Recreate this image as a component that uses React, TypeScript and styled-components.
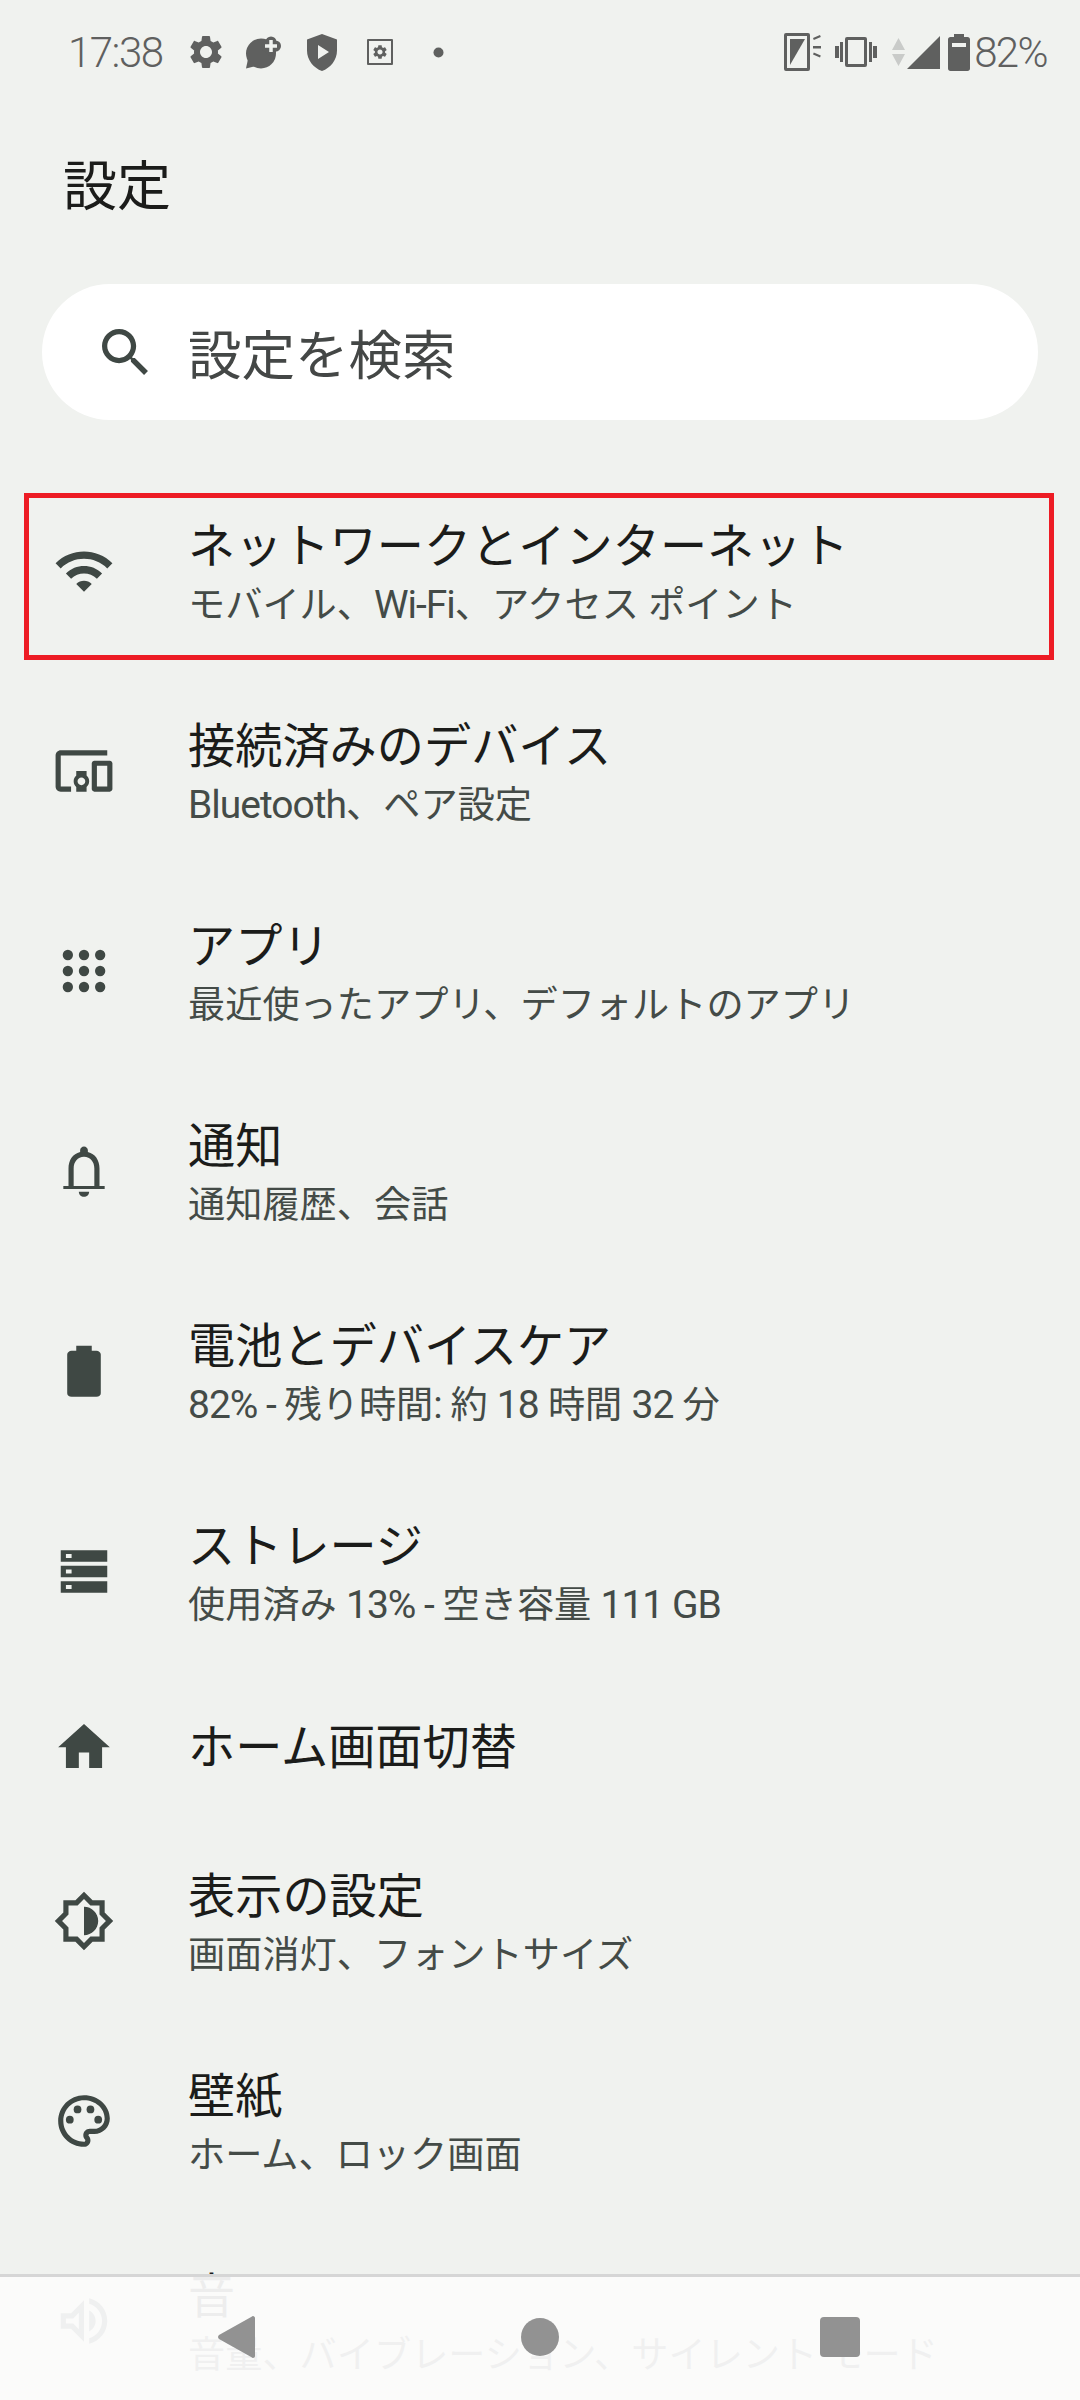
import React from 'react'
import styled, { createGlobalStyle } from 'styled-components'

type RowT = {
  title: string,
  sub?: React.ReactNode,
  icon: React.ReactNode,
  marked?: boolean
}

const GlobalStyle = createGlobalStyle`
  html, body {
    margin: 0;
    padding: 0;
    background: #f0f2ef;
  }
`
const Page = styled.div`
  position: relative;
  width: 1080px;
  height: 2400px;
  overflow: hidden;
  background: #f0f2ef;
  font-family: Roboto, "Noto Sans CJK JP", sans-serif;
`
const StatusBar = styled.div`
  display: flex;
  align-items: center;
  height: 104px;
  padding: 0 33px 0 68px;
  color: #5f605f;
`
const Clock = styled.span`
  font-size: 42px;
  font-weight: 300;
  letter-spacing: -1.5px;
  width: 93px;
`
const StatusIcon = styled.svg<{ $left: number }>`
  display: block;
  margin-left: ${props => props.$left}px;
  fill: #5f605f;
  flex: none;
`
const Spacer = styled.div`
  flex: 1;
`
const Percent = styled.span`
  font-size: 42px;
  font-weight: 300;
  letter-spacing: -1.6px;
  margin-left: 4px;
`
const PageTitle = styled.h1`
  margin: 0;
  padding: 54px 0 0 63px;
  height: 59px;
  font-size: 54px;
  line-height: 60px;
  font-weight: 400;
  color: #1b1c1a;
`
const SearchBar = styled.div`
  display: flex;
  align-items: center;
  height: 136px;
  margin: 67px 42px 51px;
  padding-left: 60px;
  border-radius: 68px;
  background: #ffffff;
`
const SearchIcon = styled.svg`
  width: 46px;
  height: 46px;
  fill: #3f4844;
  flex: none;
`
const SearchText = styled.span`
  margin: -2px 0 0 40px;
  font-size: 53.5px;
  color: #444746;
`
const List = styled.div`
  display: flex;
  flex-direction: column;
`
const Row = styled.div<{ $single: boolean }>`
  position: relative;
  display: flex;
  align-items: center;
  height: ${props => (props.$single ? 150 : 200)}px;
  padding-left: 53px;
`
const Marker = styled.div`
  position: absolute;
  top: 22px;
  left: 24px;
  right: 26px;
  bottom: 11px;
  border: 5px solid #ed1c24;
`
const RowIcon = styled.svg`
  width: 62px;
  height: 62px;
  fill: #3f4844;
  flex: none;
`
const RowText = styled.div<{ $single: boolean }>`
  display: flex;
  flex-direction: column;
  margin-left: 73px;
  padding-top: ${props => (props.$single ? 3 : 10)}px;
`
const RowTitle = styled.div`
  font-size: 47.2px;
  line-height: 58px;
  color: #1b1c1a;
`
const RowSub = styled.div`
  font-size: 37.2px;
  line-height: 58px;
  color: #444b47;
`
const Latin = styled.span`
  font-size: 39px;
  letter-spacing: -1px;
`
const NavBar = styled.div`
  position: absolute;
  left: 0;
  right: 0;
  bottom: 0;
  height: 123px;
  border-top: 3px solid #d6d6d6;
  background: rgba(251, 251, 251, 0.94);
`
const NavBack = styled.svg`
  position: absolute;
  left: 218px;
  top: 39px;
  width: 37px;
  height: 42px;
  fill: #929292;
`
const NavHome = styled.div`
  position: absolute;
  left: 521px;
  top: 41px;
  width: 38px;
  height: 38px;
  border-radius: 50%;
  background: #929292;
`
const NavRecent = styled.div`
  position: absolute;
  left: 820px;
  top: 40px;
  width: 40px;
  height: 40px;
  border-radius: 4px;
  background: #929292;
`

const rows: Array<RowT> = [
  {
    title: 'ネットワークとインターネット',
    sub: <>モバイル、<Latin>Wi-Fi</Latin>、アクセス ポイント</>,
    marked: true,
    icon: <path d="M1 9l2 2c4.97-4.97 13.03-4.97 18 0l2-2C16.93 2.93 7.08 2.93 1 9zm8 8l3 3 3-3c-1.65-1.66-4.34-1.66-6 0zm-4-4l2 2c2.76-2.76 7.24-2.76 10 0l2-2C15.14 9.14 8.87 9.14 5 13z" />
  },
  {
    title: '接続済みのデバイス',
    sub: <><Latin>Bluetooth</Latin>、ペア設定</>,
    icon: <path d="M3 6h18V4H3c-1.1 0-2 .9-2 2v12c0 1.1.9 2 2 2h4v-2H3V6zm10 6H9v1.78c-.61.55-1 1.33-1 2.22s.39 1.67 1 2.22V20h4v-1.78c.61-.55 1-1.34 1-2.22s-.39-1.67-1-2.22V12zm-2 5.5c-.83 0-1.5-.67-1.5-1.5s.67-1.5 1.5-1.5 1.5.67 1.5 1.5-.67 1.5-1.5 1.5zM22 8h-6c-.5 0-1 .5-1 1v10c0 .5.5 1 1 1h6c.5 0 1-.5 1-1V9c0-.5-.5-1-1-1zm-1 10h-4v-8h4v8z" />
  },
  {
    title: 'アプリ',
    sub: '最近使ったアプリ、デフォルトのアプリ',
    icon: (
      <>
        {[5.8, 12, 18.2].map(y => [5.75, 12, 18.25].map(x => (
          <circle key={`${x}-${y}`} cx={x} cy={y} r="2" />
        )))}
      </>
    )
  },
  {
    title: '通知',
    sub: '通知履歴、会話',
    icon: <path d="M12 22c1.1 0 2-.9 2-2h-4c0 1.1.9 2 2 2zM20 17.8h-2V11c0-3.07-1.63-5.64-4.5-6.32V4c0-.83-.67-1.5-1.5-1.5s-1.5.67-1.5 1.5v.68C7.64 5.36 6 7.92 6 11v6.8H4V19h16v-1.2zM16 17.8H8V11c0-2.48 1.51-4.5 4-4.5s4 2.02 4 4.5v6.8z" />
  },
  {
    title: '電池とデバイスケア',
    sub: <><Latin>82% - </Latin>残り時間<Latin>: </Latin>約 <Latin>18</Latin> 時間 <Latin>32</Latin> 分</>,
    icon: <path d="M16.8 4.2H15V2.2H9v2H7.2c-.9 0-1.7.7-1.7 1.4v15c0 .8.7 1.4 1.7 1.4h9.6c1 0 1.7-.6 1.7-1.4v-15c0-.7-.8-1.4-1.7-1.4z" />
  },
  {
    title: 'ストレージ',
    sub: <>使用済み <Latin>13% - </Latin>空き容量 <Latin>111 GB</Latin></>,
    icon: <path fillRule="evenodd" d="M3 4h18v4.4H3V4zm2 1.4V7h2.2V5.4H5zM3 10h18v4.4H3V10zm2 1.4V13h2.2v-1.6H5zM3 16h18v4.4H3V16zm2 1.4V19h2.2v-1.6H5z" />
  },
  {
    title: 'ホーム画面切替',
    icon: <path d="M10 20.5v-6h4v6h5v-8h3L12 3.5 2 12.5h3v8z" />
  },
  {
    title: '表示の設定',
    sub: '画面消灯、フォントサイズ',
    icon: <path d="M20 15.31L23.31 12 20 8.69V4h-4.69L12 .69 8.69 4H4v4.69L.69 12 4 15.31V20h4.69L12 23.31 15.31 20H20v-4.69zm-2-.83V18h-3.52L12 20.48 9.52 18H6v-3.52L3.52 12 6 9.52V6h3.52L12 3.52 14.48 6H18v3.52L20.48 12 18 14.48zM12 6.5v11c3.03 0 5.5-2.47 5.5-5.5S15.03 6.5 12 6.5z" />
  },
  {
    title: '壁紙',
    sub: 'ホーム、ロック画面',
    icon: (
      <>
        <path d="M12 22C6.49 22 2 17.51 2 12S6.49 2 12 2s10 4.04 10 9c0 3.31-2.69 6-6 6h-1.77c-.28 0-.5.22-.5.5 0 .12.05.23.13.33.41.47.64 1.06.64 1.67 0 1.38-1.12 2.5-2.5 2.5zm0-18c-4.41 0-8 3.59-8 8s3.59 8 8 8c.28 0 .5-.22.5-.5 0-.16-.08-.28-.14-.35-.41-.46-.63-1.05-.63-1.65 0-1.38 1.12-2.5 2.5-2.5H16c2.21 0 4-1.79 4-4 0-3.86-3.59-7-8-7z" />
        <circle cx="6.5" cy="11.5" r="1.5" />
        <circle cx="9.5" cy="7.5" r="1.5" />
        <circle cx="14.5" cy="7.5" r="1.5" />
        <circle cx="17.5" cy="11.5" r="1.5" />
      </>
    )
  },
  {
    title: '音',
    sub: '音量、バイブレーション、サイレント モード',
    icon: <path d="M3 9v6h4l5 5V4L7 9H3zm7-.17v6.34L7.83 13H5v-2h2.83L10 8.83zM16.5 12c0-1.77-1.02-3.29-2.5-4.03v8.05c1.48-.73 2.5-2.25 2.5-4.02zM14 3.23v2.06c2.89.86 5 3.54 5 6.71s-2.11 5.85-5 6.71v2.06c4.01-.91 7-4.49 7-8.77 0-4.28-2.99-7.86-7-8.77z" />
  }
]

const gear = 'M19.14 12.94c.04-.3.06-.61.06-.94 0-.32-.02-.64-.07-.94l2.03-1.58c.18-.14.23-.41.12-.61l-1.92-3.32c-.12-.22-.37-.29-.59-.22l-2.39.96c-.5-.38-1.03-.7-1.62-.94L14.4 2.81c-.04-.24-.24-.41-.48-.41h-3.84c-.24 0-.43.17-.47.41l-.36 2.54c-.59.24-1.13.57-1.62.94l-2.39-.96c-.22-.08-.47 0-.59.22L2.74 8.87c-.12.21-.08.47.12.61l2.03 1.58c-.05.3-.09.63-.09.94s.02.64.07.94l-2.03 1.58c-.18.14-.23.41-.12.61l1.92 3.32c.12.22.37.29.59.22l2.39-.96c.5.38 1.03.7 1.62.94l.36 2.54c.05.24.24.41.48.41h3.84c.24 0 .44-.17.47-.41l.36-2.54c.59-.24 1.13-.56 1.62-.94l2.39.96c.22.08.47 0 .59-.22l1.92-3.32c.12-.22.07-.47-.12-.61l-2.01-1.58zM12 15.6c-1.98 0-3.6-1.62-3.6-3.6s1.62-3.6 3.6-3.6 3.6 1.62 3.6 3.6-1.62 3.6-3.6 3.6z'

const App: React.FC = () => {
  return (
    <Page>
      <GlobalStyle />
      <StatusBar>
        <Clock>17:38</Clock>
        <StatusIcon $left={29} width="32" height="34" viewBox="2.4 2.2 19.2 19.6"><path d={gear} /></StatusIcon>
        <StatusIcon $left={23} width="38" height="34" viewBox="0 0 38 34">
          <circle cx="16" cy="18.5" r="15" />
          <path d="M3 24L1 33.5 11 31z" />
          <path d="M26 7v8M21.5 11h9" stroke="#5f605f" strokeWidth="11" strokeLinecap="round" fill="none" />
          <path d="M26 5v12M20 11h12" stroke="#f0f2ef" strokeWidth="3.5" fill="none" />
        </StatusIcon>
        <StatusIcon $left={24} width="30" height="37" viewBox="0 0 30 37">
          <path fillRule="evenodd" d="M15 0l15 5.5v11C30 26 23.5 34 15 37 6.5 34 0 26 0 16.5v-11L15 0zm-4 11v14l11-7-11-7z" />
        </StatusIcon>
        <StatusIcon $left={30} width="26" height="26" viewBox="0 0 26 26">
          <path fillRule="evenodd" d="M1 0h24a1 1 0 0 1 1 1v24a1 1 0 0 1-1 1H1a1 1 0 0 1-1-1V1a1 1 0 0 1 1-1zm1 2v22h22V2H2z" />
          <path transform="translate(4.5 4.5) scale(.708)" d={gear} />
        </StatusIcon>
        <StatusIcon $left={40} width="11" height="11" viewBox="0 0 11 11"><circle cx="5.5" cy="5.5" r="5" /></StatusIcon>
        <Spacer />
        <StatusIcon $left={0} width="38" height="38" viewBox="0 0 38 38">
          <path fillRule="evenodd" d="M2 0h22a2 2 0 0 1 2 2v34a2 2 0 0 1-2 2H2a2 2 0 0 1-2-2V2a2 2 0 0 1 2-2zm1 3v32h20V3H3z" />
          <path d="M6 6h15L6 32V6z" />
          <path d="M29 5l7-3 .8 2-7 3zM29 13h8v2.5h-8zM29 21.5l.8-2 7 3-.8 2z" />
        </StatusIcon>
        <StatusIcon $left={13} width="42" height="30" viewBox="0 0 42 30">
          <path fillRule="evenodd" d="M12 0h18a2 2 0 0 1 2 2v26a2 2 0 0 1-2 2H12a2 2 0 0 1-2-2V2a2 2 0 0 1 2-2zm1 3v24h16V3H13z" />
          <path d="M0 9h4v12H0zM5 5h3v20H5zM34 5h3v20h-3zM38 9h4v12h-4z" />
        </StatusIcon>
        <StatusIcon $left={15} width="13" height="28" viewBox="0 0 13 28">
          <path fill="#c9cbc9" d="M6.5 0L13 12H0zM0 16h13L6.500 28z" />
        </StatusIcon>
        <StatusIcon $left={2} width="33" height="33" viewBox="0 0 33 33"><path d="M33 0v33H0z" /></StatusIcon>
        <StatusIcon $left={8} width="22" height="37" viewBox="0 0 22 37">
          <path fillRule="evenodd" d="M6 0h10v3h3.5C21 3 22 4 22 5.5v29c0 1.5-1 2.5-2.5 2.5h-17C1 37 0 36 0 34.5v-29C0 4 1 3 2.5 3H6V0zM4 9v4h14V9H4z" />
        </StatusIcon>
        <Percent>82%</Percent>
      </StatusBar>
      <PageTitle>設定</PageTitle>
      <SearchBar>
        <SearchIcon viewBox="3 3 17.5 17.5">
          <path d="M15.5 14h-.79l-.28-.27C15.41 12.59 16 11.11 16 9.5 16 5.91 13.09 3 9.5 3S3 5.91 3 9.5 5.91 16 9.5 16c1.61 0 3.09-.59 4.23-1.57l.27.28v.79l5 4.99L20.49 19l-4.99-5zm-6 0C7.01 14 5 11.99 5 9.5S7.01 5 9.5 5 14 7.01 14 9.5 11.99 14 9.5 14z" />
        </SearchIcon>
        <SearchText>設定を検索</SearchText>
      </SearchBar>
      <List>
        {rows.map(row => {
          return (
            <Row key={row.title} $single={!row.sub}>
              {row.marked && <Marker />}
              <RowIcon viewBox="0 0 24 24">{row.icon}</RowIcon>
              <RowText $single={!row.sub}>
                <RowTitle>{row.title}</RowTitle>
                {row.sub && <RowSub>{row.sub}</RowSub>}
              </RowText>
            </Row>
          )
        })}
      </List>
      <NavBar>
        <NavBack viewBox="0 0 37 42"><path d="M35 0c1 0 2 1 2 2v38c0 1-1 2-2 2-.6 0-1-.3-1.4-.7L1 23c-1.3-1-1.3-3 0-4L33.6.8C34 .3 34.4 0 35 0z" /></NavBack>
        <NavHome />
        <NavRecent />
      </NavBar>
    </Page>
  )
}

export default App
